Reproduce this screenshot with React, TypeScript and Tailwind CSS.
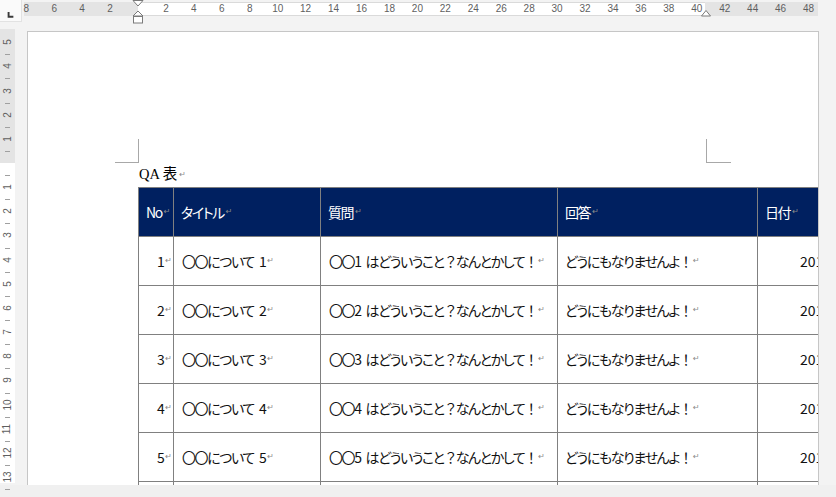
import React from "react";

const TOP_NUMS: number[] = [];
for (let i = -8; i <= 48; i += 2) if (i !== 0) TOP_NUMS.push(i);
const LEFT_NUMS: number[] = [-5, -4, -3, -2, -1, 1, 2, 3, 4, 5, 6, 7, 8, 9, 10, 11, 12, 13];

function Pil() {
  return <span className="font-['DejaVu_Sans'] text-[8px] tracking-normal ml-[2px] text-[#8a8a8a]">↵</span>;
}

function FW({ c }: { c: string }) {
  return <span className="[font-feature-settings:normal] tracking-[-2px]">{c}</span>;
}

const jp = "font-['Noto_Sans_CJK_JP','Noto_Sans',sans-serif] [font-feature-settings:'palt'] tracking-[-1.4px]";

export default function App() {
  const rows = [1, 2, 3, 4, 5];
  const cell = "h-[49px] border-r border-b border-[#808080] flex items-center whitespace-nowrap";
  return (
    <div className="w-[836px] h-[497px] bg-[#f3f3f3] flex flex-col overflow-hidden">
      {/* top ruler row */}
      <div className="relative h-[31px] shrink-0 flex">
        <div className="w-[22px] h-[22px] bg-[#fafafa] border-r border-b border-[#e2e2e2] flex items-start">
          <svg width="22" height="22" viewBox="0 0 22 22">
            <path d="M9 12 V17 H14" stroke="#3a3a3a" strokeWidth="2" fill="none" />
          </svg>
        </div>
        <div className="relative ml-[2px] mt-[2px] h-[14px] flex">
          <div className="w-[114px] h-full bg-[#e4e4e4]" />
          <div className="w-[567px] h-full bg-white border-y border-[#dadada]" />
          <div className="w-[113px] h-full bg-[#e4e4e4]" />
          {TOP_NUMS.map((n) => (
            <span
              key={n}
              className="absolute top-0 h-[14px] leading-[14px] -translate-x-1/2 font-['Liberation_Sans',sans-serif] text-[10px] text-[#5f5f5f]"
              style={{ left: 114 + n * 13.97 }}
            >
              {Math.abs(n)}
            </span>
          ))}
        </div>
        <svg className="absolute left-[132px] top-0" width="12" height="24" viewBox="0 0 12 24">
          <polygon points="1,0.5 11,0.5 6,6" fill="#fff" stroke="#7a7a7a" />
          <polygon points="6,11 11,16 1,16" fill="#fff" stroke="#7a7a7a" />
          <rect x="1.5" y="16.5" width="9" height="6.5" fill="#fff" stroke="#7a7a7a" />
        </svg>
        <svg className="absolute left-[700px] top-0" width="12" height="18" viewBox="0 0 12 18">
          <polygon points="6,10.5 10.5,16 1.5,16" fill="#fff" stroke="#7a7a7a" />
        </svg>
      </div>

      {/* middle */}
      <div className="flex h-[454px] shrink-0">
        <div className="relative w-[15px] h-[452px] shrink-0 flex flex-col">
          <div className="h-[134px] -mt-[2px] bg-[#e4e4e4]" />
          <div className="flex-1 bg-white" />
          {LEFT_NUMS.map((n) => (
            <span
              key={n}
              className="absolute left-0 w-[15px] h-[10px] -translate-y-1/2 flex items-center justify-center"
              style={{ top: 132 + n * 24.15 }}
            >
              <span className="-rotate-90 font-['Liberation_Sans',sans-serif] text-[10px] leading-[10px] text-[#5f5f5f] whitespace-nowrap">
                {Math.abs(n)}
              </span>
            </span>
          ))}
          {LEFT_NUMS.map((n) => (
            <span
              key={"t" + n}
              className="absolute left-[5px] w-[5px] h-[1px] bg-[#a0a0a0]"
              style={{ top: 132 + n * 24.15 + (n > 0 ? -12 : 12) }}
            />
          ))}
          <span className="absolute left-[5px] w-[5px] h-[1px] bg-[#a0a0a0]" style={{ top: 132 + 13 * 24.15 + 12 }} />
        </div>

        <div className="ml-[12px] w-[792px] min-w-0 shrink-0 h-[454px] bg-white border-l border-r border-t border-[#c6c6c6] overflow-hidden">
          <div className="w-[790px] h-[453px] overflow-hidden flex flex-col">
            <div className="pt-[107px] flex shrink-0">
              <div className="ml-[87px] w-[24px] h-[24px] border-r border-b border-[#a8a8a8]" />
              <div className="ml-[567px] w-[25px] h-[24px] border-l border-b border-[#a8a8a8]" />
            </div>
            <div className="ml-[111px] h-[24px] flex items-center shrink-0 font-['Liberation_Serif','Noto_Sans_CJK_JP',serif] text-[14.5px] text-black">
              QA 表<Pil />
            </div>
            <div className="ml-[110px] w-[680px] overflow-hidden shrink-0">
              <div className={"w-[820px] grid grid-cols-[35px_147px_237px_200px_200px] border-l border-t border-[#808080] text-[14px] text-[#111] " + jp}>
                {["No", "タイトル", "質問", "回答", "日付"].map((h) => (
                  <div key={h} className={cell + " bg-[#002060] pl-[7px] text-white"}>
                    {h}
                    <Pil />
                  </div>
                ))}
                {rows.map((r) => (
                  <React.Fragment key={r}>
                    <div className={cell + " justify-end pr-[1px]"}>
                      {r}
                      <Pil />
                    </div>
                    <div className={cell + " pl-[8px]"}>
                      〇〇について<span className="ml-[5px]">{r}</span>
                      <Pil />
                    </div>
                    <div className={cell + " pl-[8px]"}>
                      〇〇{r}<span className="ml-[5px]">はどういうこと</span><FW c="？" />なんとかして<FW c="！" />
                      <Pil />
                    </div>
                    <div className={cell + " pl-[7px]"}>
                      どうにもなりませんよ<FW c="！" />
                      <Pil />
                    </div>
                    <div className={cell + " pl-[42px] tracking-normal"}>
                      2019/04/0{r}
                      <Pil />
                    </div>
                  </React.Fragment>
                ))}
                {[0, 1, 2, 3, 4].map((i) => (
                  <div key={"e" + i} className={cell} />
                ))}
              </div>
            </div>
          </div>
        </div>
      </div>

      <div className="h-[12px] bg-[#f0f0f0] shrink-0" />
    </div>
  );
}
